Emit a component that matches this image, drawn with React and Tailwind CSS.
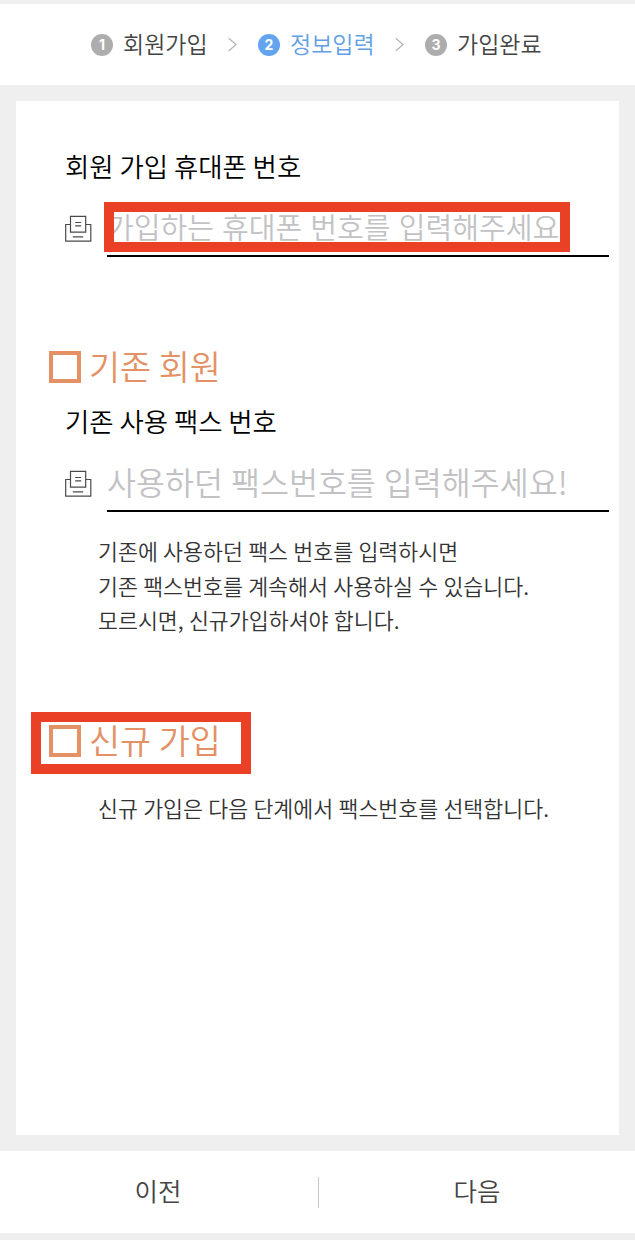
import React, { useState } from 'react';
import clsx from 'clsx';

const STEPS = ['회원가입', '정보입력', '가입완료'];

const Chevron = () => (
  <svg className="mx-[20px] h-[16px] w-[10px] shrink-0" viewBox="0 0 10 16" fill="none">
    <path d="M0.7 1.2 L8 7.5 L0.7 14" stroke="#b5b5b5" strokeWidth="1.3" />
  </svg>
);

const FaxIcon = () => (
  <svg className="h-[28px] w-[28px] shrink-0" viewBox="0 0 28 28" fill="none" stroke="#4a4a4a" strokeWidth="1.2">
    <path d="M5.5 9.5 H0.7 V26.2 H25.8 V9.5 H20.7" />
    <path d="M5.5 1.3 H20.7 V17.2 H5.5 Z" />
    <path d="M10.2 7.5 H16.2 M10.2 10.8 H16.2 M7.8 21.8 H18.2" />
  </svg>
);

const StepBar = ({ current }) => (
  <header className="flex h-[81px] items-center bg-white pl-[91px]">
    {STEPS.map((step, index) => (
      <React.Fragment key={step}>
        {index > 0 && <Chevron />}
        <div className="flex w-[117px] shrink-0 items-center">
          <span
            className={clsx(
              'flex h-[22px] w-[22px] items-center justify-center rounded-full font-[Inter] text-[14px] font-bold text-white',
              index === current ? 'bg-[#62a4f0]' : 'bg-[#adadad]'
            )}
          >
            {index + 1}
          </span>
          <span
            className={clsx(
              'ml-[10px] pb-[4px] text-[23px] leading-[34px] whitespace-nowrap',
              index === current ? 'text-[#62a0e6]' : 'text-[#444444]'
            )}
          >
            {step}
          </span>
        </div>
      </React.Fragment>
    ))}
  </header>
);

const NumberField = ({ label, placeholder, value, onChange, inputClass, children }) => (
  <div className="pl-[49px]">
    <label className="block h-[38px] text-[26.4px] leading-[37px] text-black">{label}</label>
    <div className="mt-[14px] flex">
      <div className="mt-[16px] mr-[14px] w-[28px]">
        <FaxIcon />
      </div>
      <div className="relative mr-[10px] h-[58px] flex-1 border-b-2 border-black">
        <input
          type="text"
          className={clsx(
            'block w-full bg-transparent outline-none placeholder:text-[#c2c2c5] placeholder:opacity-100',
            inputClass
          )}
          placeholder={placeholder}
          value={value}
          onChange={(e) => onChange(e.target.value)}
        />
        {children}
      </div>
    </div>
  </div>
);

const CheckTitle = ({ checked, onClick, children }) => (
  <button type="button" onClick={onClick} className="flex h-[42px] items-center text-[#e39165]">
    <span
      className={clsx('h-[32px] w-[32px] shrink-0 border-4 border-[#e39165]', checked && 'bg-[#e39165]')}
    />
    <span className="ml-[8px] pb-[2px] text-[33.8px] leading-[40px] whitespace-nowrap">{children}</span>
  </button>
);

const App = () => {
  const [phone, setPhone] = useState('');
  const [fax, setFax] = useState('');
  const [memberType, setMemberType] = useState(null);

  return (
    <div className="flex h-[1240px] w-[635px] flex-col overflow-hidden bg-[#efefef] pt-[4px] pb-[7px] font-['Noto_Sans_CJK_KR',sans-serif] font-[350]">
      <StepBar current={1} />

      <main className="mx-4 my-4 flex-1 bg-white pt-[46px]">
        <NumberField
          label="회원 가입 휴대폰 번호"
          placeholder="가입하는 휴대폰 번호를 입력해주세요"
          value={phone}
          onChange={setPhone}
          inputClass="h-[53px] text-[29.1px] [word-spacing:1.5px]"
        >
          <div className="pointer-events-none absolute top-[3px] -left-[3px] h-[50px] w-[466px] border-[10px] border-[#ea4026]" />
        </NumberField>

        <div className="mt-[89px] pl-[33px]">
          <CheckTitle checked={memberType === 'old'} onClick={() => setMemberType('old')}>
            기존 회원
          </CheckTitle>
        </div>
        <div className="mt-[14px]">
          <NumberField
            label="기존 사용 팩스 번호"
            placeholder="사용하던 팩스번호를 입력해주세요!"
            value={fax}
            onChange={setFax}
            inputClass="h-[54px] text-[31.5px] [word-spacing:1px]"
          />
        </div>
        <p className="mt-[22px] pl-[82px] text-[21.7px] leading-[34.5px] text-[#333333] [word-spacing:0.4px]">
          기존에 사용하던 팩스 번호를 입력하시면
          <br />
          기존 팩스번호를 계속해서 사용하실 수 있습니다.
          <br />
          모르시면, 신규가입하셔야 합니다.
        </p>

        <div className="relative mt-[82px] pl-[33px]">
          <CheckTitle checked={memberType === 'new'} onClick={() => setMemberType('new')}>
            신규 가입
          </CheckTitle>
          <div className="pointer-events-none absolute -top-[8px] left-[15px] h-[62px] w-[220px] border-[10px] border-[#ea4026]" />
        </div>
        <p className="mt-[29px] pl-[82px] text-[21.7px] leading-[34.5px] text-[#333333] [word-spacing:0.4px]">
          신규 가입은 다음 단계에서 팩스번호를 선택합니다.
        </p>
      </main>

      <footer className="flex h-[82px] items-center bg-white text-[25.5px] text-[#444444]">
        <button type="button" className="flex-1 pr-[2px] pb-[3px]">
          이전
        </button>
        <span className="h-[31px] w-px bg-[#c8c8c8]" />
        <button type="button" className="flex-1 pb-[3px]">
          다음
        </button>
      </footer>
    </div>
  );
};

export default App;
